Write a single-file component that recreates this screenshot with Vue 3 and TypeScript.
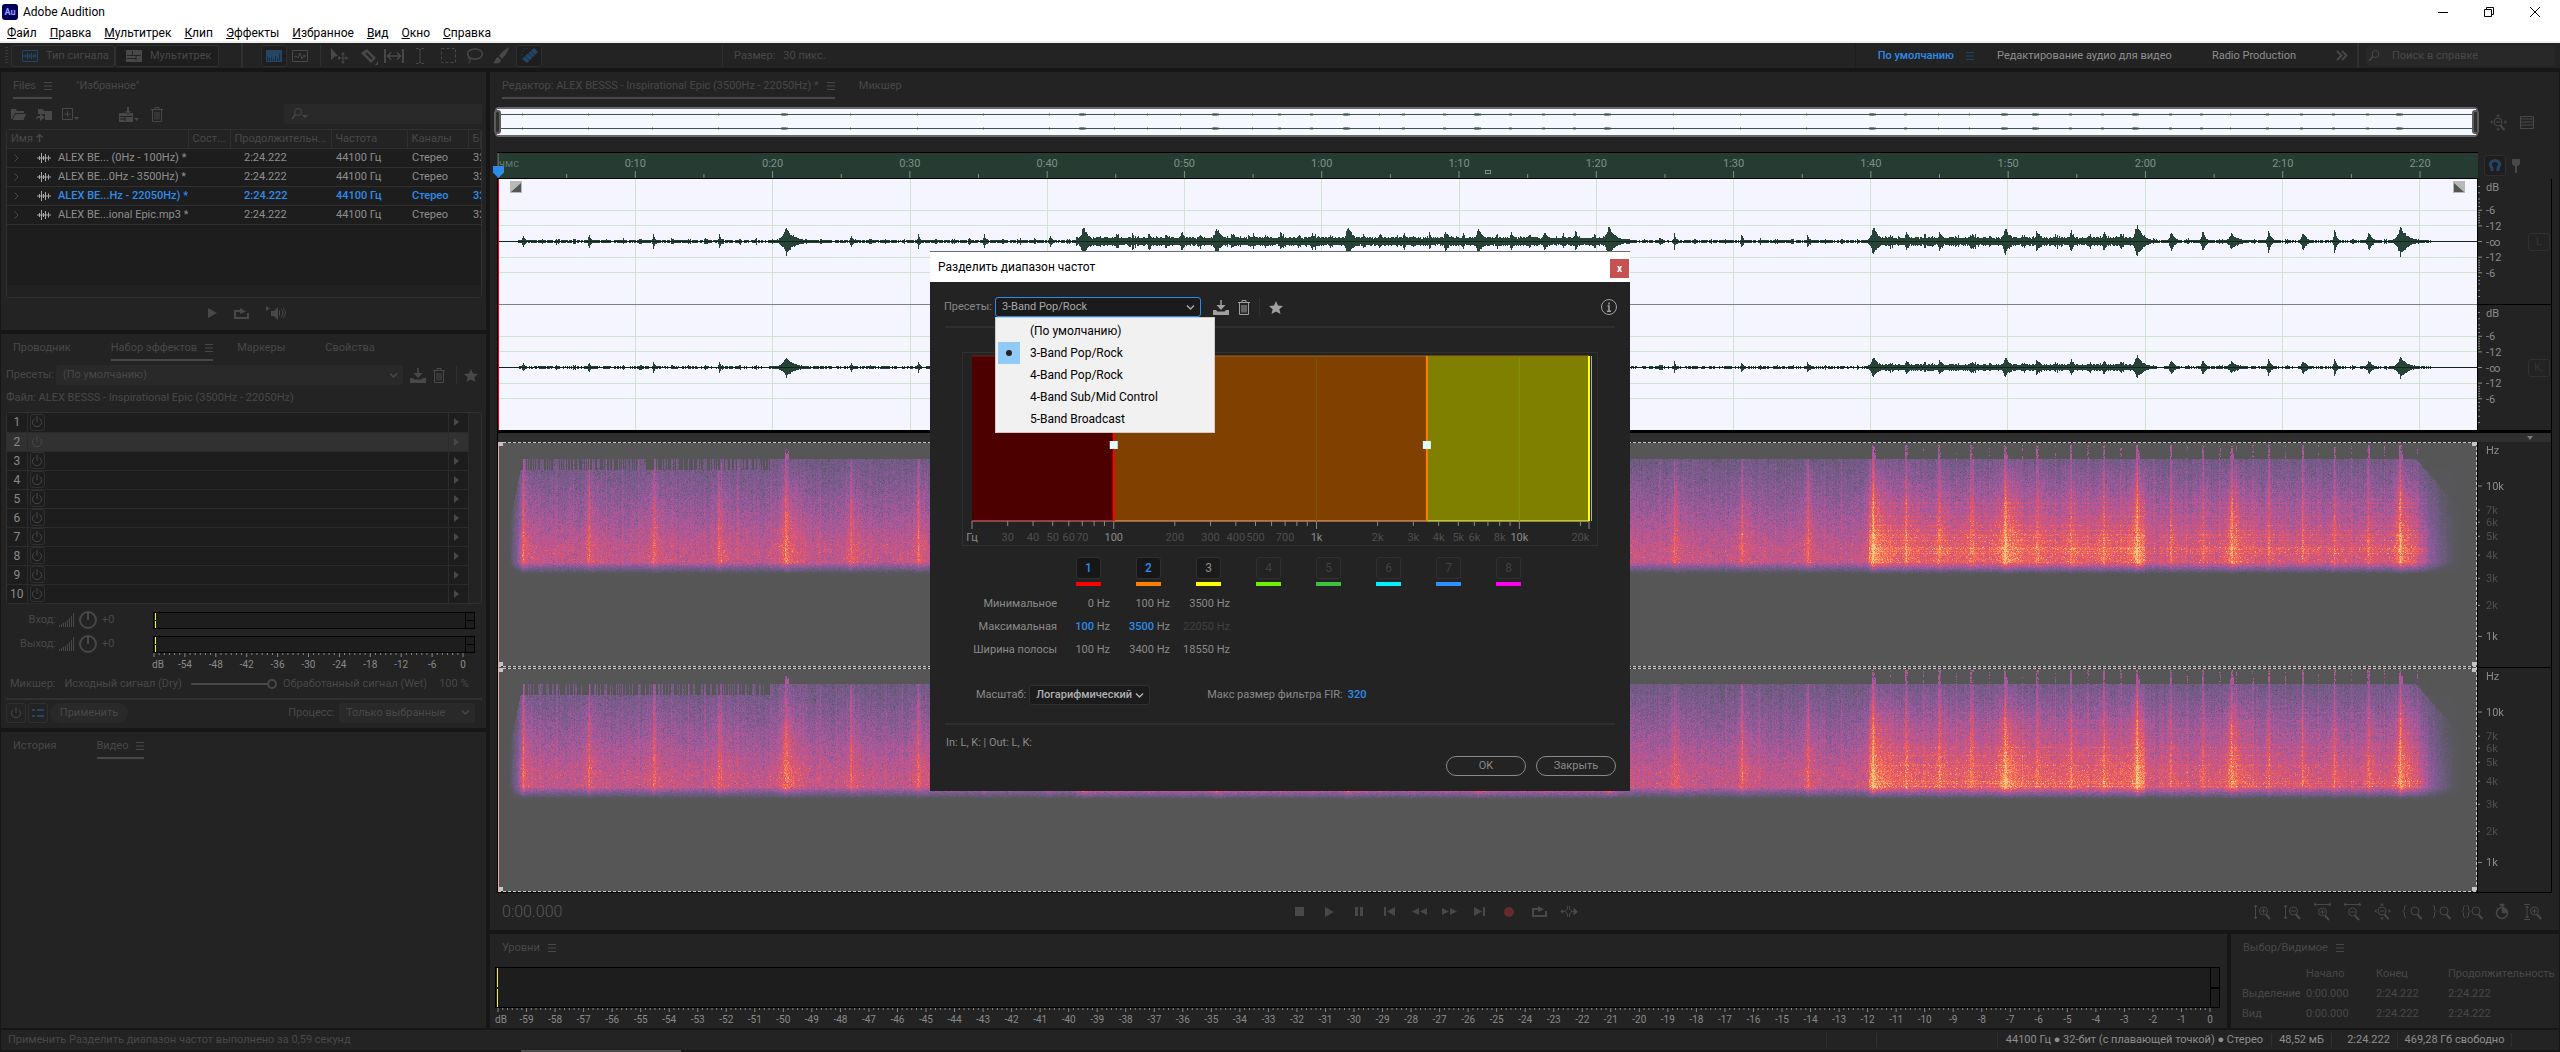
<script setup lang="ts">
import { h, onMounted, onBeforeUnmount, ref } from 'vue'

const duration = 144.222

/* ---------- icons ---------- */
const glass = (cx: number, cy: number) =>
  `<circle cx="${cx}" cy="${cy}" r="4" fill="none" stroke="currentColor"/><path d="M${cx + 2.5} ${cy + 3.5}l4 4.5" stroke="currentColor" stroke-width="2"/>`
const icons: Record<string, [number, number, string]> = {
  wavebox: [16, 12, '<path d="M.5.5h15v11H.5z" fill="none" stroke="currentColor"/><path d="M1 6h14M3.5 4v4M5.500 2.500v7M7.500 4v4M9.500 3v6M11.500 4.500v3M13 3v5" stroke="currentColor"/>'],
  multibox: [16, 12, '<path d="M0 0h16v12H0z" fill="currentColor"/><path d="M6.500 1v4M1 5.500h14M10 6v5M1 8.500h9" stroke="#232323"/>'],
  spectral: [16, 12, '<path d="M0 0h16v12H0z" fill="currentColor"/><path d="M1.500 6v5M3.500 8v3M5.500 7v4M7.500 9v2M9.500 6v5M11.500 8v3M13.500 4v7" stroke="#1a2c3e"/>'],
  pitch: [16, 12, '<path d="M.5.500h15v11H.5z" fill="none" stroke="currentColor"/><path d="M2 7l2-1 2 2 2-5 2 6 2-4 1 2 1-2" fill="none" stroke="currentColor"/>'],
  move: [18, 18, '<path d="M1 1l7 8-3 .5L1 13z" fill="currentColor"/><path d="M13 6v10M8 11h10" stroke="currentColor"/><path d="M13 5l-2 2.500h4zM13 17l-2-2.500h4zM7.500 11l2.500-2v4zM18 11l-2.500-2v4z" fill="currentColor"/>'],
  razor: [18, 18, '<path d="M1 6l6-4 9 9-5 5z" fill="currentColor"/><path d="M6 6l6 6" stroke="#232323" stroke-width="2"/><path d="M18 14v4h-3z" fill="currentColor"/>'],
  slip: [20, 16, '<path d="M1 1v14M19 1v14" stroke="currentColor" stroke-width="2"/><path d="M4 8h12M7 4.500L3.500 8 7 11.500M13 4.500L16.500 8 13 11.500" fill="none" stroke="currentColor" stroke-width="1.500"/>'],
  ibeam: [8, 16, '<path d="M0 .5h2.500L4 2l1.500-1.500H8M0 15.500h2.500L4 14l1.500 1.500H8M4 2v12" fill="none" stroke="currentColor"/>'],
  marquee: [15, 15, '<path d="M.5.500h14v14H.5z" fill="none" stroke="currentColor" stroke-dasharray="3 2"/>'],
  lasso: [17, 16, '<ellipse cx="9" cy="6" rx="7.500" ry="5" fill="none" stroke="currentColor" stroke-width="1.500"/><path d="M2.500 9c-2 2 1 3 2 2M4 11c1 2 0 4-2 4" fill="none" stroke="currentColor"/>'],
  brush: [17, 17, '<path d="M16 0c-5 3-8 6-10 9l3 3c3-3 6-7 7-12zM5 10c-3 1-2 4-5 6 4 1 8 0 8-3z" fill="currentColor"/>'],
  heal: [17, 17, '<path d="M1 12L13 1l4 4L6 16z" fill="currentColor"/><path d="M7 6l5 5M10 4l4 4M4 9l5 5" stroke="#1c2a38"/><path d="M1 8c-1-4 3-8 8-6" fill="none" stroke="currentColor" stroke-dasharray="1 2"/>'],
  menu: [8, 8, '<path d="M0 .5h8M0 4h8M0 7.500h8" stroke="currentColor"/>'],
  folder: [15, 12, '<path d="M0 1h5l1 2h7v2H4L1 11H0zM4.500 6H15l-2.500 6H1.500z" fill="currentColor"/>'],
  importf: [16, 13, '<path d="M2 1h5l1 2h8v9H9V6H2z" fill="currentColor"/><path d="M0 12c0-4 2-4 4-4V5l5 4.500L4 13v-3c-2 0-3 0-4 2z" fill="currentColor"/>'],
  newf: [17, 13, '<path d="M.5.500h10v11H.5zM5.500 3v6M2.500 6h6" fill="none" stroke="currentColor"/><path d="M12 9h5l-2.500 3z" fill="currentColor"/>'],
  insert: [20, 15, '<path d="M0 6h14v9H0z" fill="currentColor"/><path d="M1 9.500h12M6 10v4M1 12h5" stroke="#232323"/><path d="M9 0v6M5.500 4L9 8l3.500-4z" stroke="#232323" stroke-width=".5" fill="currentColor"/><path d="M9 0v5" stroke="currentColor" stroke-width="2"/><path d="M15 11h5l-2.500 3z" fill="currentColor"/>'],
  trash: [12, 15, '<path d="M0 2.500h12M4 2V.5h4V2M1.500 3v11.500h9V3M4 5v7.500M6 5v7.500M8 5v7.500" fill="none" stroke="currentColor"/>'],
  find: [17, 12, '<circle cx="7" cy="4" r="3.500" fill="none" stroke="currentColor"/><path d="M4.500 6.500L1 11" stroke="currentColor" stroke-width="1.500"/><path d="M11 7h6l-3 3z" fill="currentColor"/>'],
  lens: [12, 12, '<circle cx="7.500" cy="4" r="3.500" fill="none" stroke="currentColor"/><path d="M5 6.500L1 11" stroke="currentColor" stroke-width="1.500"/>'],
  up: [7, 8, '<path d="M3.500 0v8" stroke="currentColor" stroke-width="1.500"/><path d="M.5 3.500l3-3 3 3" fill="none" stroke="currentColor" stroke-width="1.500"/>'],
  wave: [14, 10, '<path d="M0 5h14M2.500 3v4M4.500 0v10M6.500 3v4M8.500 1v8M11.500 2.500v5" stroke="currentColor"/>'],
  right: [5, 8, '<path d="M.5.500L4 4 .5 7.500" fill="none" stroke="currentColor"/>'],
  down: [9, 5, '<path d="M1 .5L4.500 4 8 .5" fill="none" stroke="currentColor" stroke-width="1.500"/>'],
  play: [9, 10, '<path d="M0 0l9 5-9 5z" fill="currentColor"/>'],
  loop: [15, 11, '<path d="M6 3H1v7h13V5" fill="none" stroke="currentColor" stroke-width="2"/><path d="M6 0l6 3.500L6 6z" fill="currentColor"/>'],
  autoplay: [20, 14, '<path d="M0 0l4 2.500L0 5zM5 5h3l4-4v13l-4-4H5z" fill="currentColor"/><path d="M13.500 4.500v5M15 3c2.500 2 2.500 6 0 8M17 2c3 3 3 7 0 10" fill="none" stroke="currentColor"/>'],
  save: [16, 15, '<path d="M0 10h3l1.500 1.500h7L13 10h3v5H0z" fill="currentColor"/><path d="M8 0v6" stroke="currentColor" stroke-width="1.500"/><path d="M3.500 5h9L8 10z" fill="currentColor"/>'],
  star: [14, 13, '<path d="M7 0l2 4.500 5 .5-3.700 3.300L11.500 13 7 10.500 2.500 13l1.200-4.700L0 5l5-.5z" fill="currentColor"/>'],
  power: [12, 12, '<path d="M3.500 2.500a4.500 4.500 0 1 0 5 0M6 0v6" fill="none" stroke="currentColor"/>'],
  tri: [5, 8, '<path d="M0 0l5 4-5 4z" fill="currentColor"/>'],
  bars: [15, 14, '<path d="M.5 12v2M2.500 11v3M4.500 10v4M6.500 9v5M8.500 7v7M10.500 5v9M12.500 3v11M14.500 0v14" stroke="currentColor"/>'],
  list: [12, 8, '<path d="M0 1h3M5 1h7M0 7h3M5 7h7" stroke="currentColor" stroke-width="2"/>'],
  more: [12, 9, '<path d="M1 0l4.500 4.500L1 9M6 0l4.500 4.500L6 9" fill="none" stroke="currentColor" stroke-width="2"/>'],
  info: [16, 16, '<circle cx="8" cy="8" r="7.500" fill="none" stroke="currentColor"/><path d="M8 3.500v2M6.500 7H8v5M6 12.200h4" fill="none" stroke="currentColor" stroke-width="1.500"/>'],
  stop: [9, 9, '<path d="M0 0h9v9H0z" fill="currentColor"/>'],
  pause: [8, 9, '<path d="M0 0h3v9H0zM5 0h3v9H5z" fill="currentColor"/>'],
  prev: [11, 9, '<path d="M0 0h2v9H0zM11 0v9L3 4.500z" fill="currentColor"/>'],
  rew: [15, 7, '<path d="M7 0v7L0 3.500zM15 0v7L8 3.500z" fill="currentColor"/>'],
  ff: [15, 7, '<path d="M0 0l7 3.500L0 7zM8 0l7 3.500L8 7z" fill="currentColor"/>'],
  next: [11, 9, '<path d="M9 0h2v9H9zM0 0l8 4.500L0 9z" fill="currentColor"/>'],
  rec: [10, 10, '<circle cx="5" cy="5" r="5" fill="#662a2c"/>'],
  skip: [17, 11, '<path d="M6.500 0v3L4 5.500 6.500 8v3M8.500 0v3l2.500 2.500L8.500 8v3" fill="none" stroke="currentColor"/><path d="M0 5.500h4M10 5.500h6M2 3.500L0 5.500l2 2M13 2.500l3.500 3-3.500 3z" fill="currentColor" stroke="currentColor"/>'],
  zinv: [17, 16, '<path d="M1.500 1v14M0 3l1.500-2L3 3M0 13l1.500 2L3 13M7 7h5M9.500 4.500v5" fill="none" stroke="currentColor"/>' + glass(9.5, 7)],
  zoutv: [17, 16, '<path d="M1.500 1v14M0 3l1.500-2L3 3M0 13l1.500 2L3 13M7 7h5" fill="none" stroke="currentColor"/>' + glass(9.5, 7)],
  zinh: [17, 17, '<path d="M0 1.500h17M2 0L0 1.500 2 3M15 0l2 1.500L15 3M6 9h5M8.500 6.500v5" fill="none" stroke="currentColor"/>' + glass(8.5, 9)],
  zouth: [17, 17, '<path d="M0 1.500h17M2 0L0 1.500 2 3M15 0l2 1.500L15 3M6 9h5" fill="none" stroke="currentColor"/>' + glass(8.5, 9)],
  zfull: [17, 17, '<path d="M6 8h4.500" stroke="currentColor"/><path d="M8 0l2 2.500H6zM8 17l2-2.500H6zM0 8l2.500-2v4zM17 8l-2.500-2v4z" fill="currentColor"/>' + glass(8, 8)],
  zsell: [19, 15, '<path d="M3 1L1.500 3v3L0 7.500 1.500 9v3L3 14" fill="none" stroke="currentColor"/>' + glass(12, 7)],
  zselr: [18, 15, '<path d="M0 1l1.500 2v3L3 7.500 1.500 9v3L0 14" fill="none" stroke="currentColor"/>' + glass(11, 7)],
  zsel: [21, 15, '<path d="M3 1L1.500 3v3L0 7.500 1.500 9v3L3 14M5 1l1.500 2v3L8 7.500 6.500 9v3L5 14" fill="none" stroke="currentColor"/>' + glass(14, 7)],
  timer: [14, 15, '<circle cx="7" cy="9" r="5.500" fill="none" stroke="currentColor" stroke-width="1.500"/><path d="M7 1v8h5V7L9 4zM5 0h4v2H5zM1 3l2 2" fill="currentColor" stroke="currentColor" stroke-width=".5"/>'],
  zamp: [17, 16, '<path d="M0 .5h6M0 15.500h6M3 2v12M1.500 4L3 2l1.500 2M1.500 12L3 14l1.500-2M8 7h5M10.500 4.500v5" fill="none" stroke="currentColor"/>' + glass(10.5, 7)],
  layout: [14, 13, '<path d="M.5.500h13v12H.5zM1 3h12M1 6h12M1 9h12" fill="none" stroke="currentColor"/>'],
  magnet: [12, 13, '<path d="M3 12V9C-1 4 3 1.500 6 1.500S13 4 9 9v3" fill="none" stroke="currentColor" stroke-width="3"/>'],
  pin: [8, 14, '<path d="M0 0h8v5L6 7H5v7H3V7H2L0 5z" fill="currentColor"/>'],
  min: [10, 10, '<path d="M0 5.500h10" stroke="currentColor"/>'],
  restore: [10, 10, '<path d="M.5 2.500h7v7h-7zM2.500 2V.5h7v7H8" fill="none" stroke="currentColor"/>'],
  close: [10, 10, '<path d="M0 0l10 10M10 0L0 10" stroke="currentColor"/>'],
}
const Ico = (p: { n: string }) => {
  const [w, hh, body] = icons[p.n]
  return h('svg', { width: w, height: hh, viewBox: `0 0 ${w} ${hh}`, 'aria-hidden': 'true', innerHTML: body })
}
Ico.props = ['n']

/* ---------- data ---------- */
const menus = ['Файл', 'Правка', 'Мультитрек', 'Клип', 'Эффекты', 'Избранное', 'Вид', 'Окно', 'Справка']
const files = [
  { name: 'ALEX BE... (0Hz - 100Hz) *', on: false },
  { name: 'ALEX BE...0Hz - 3500Hz) *', on: false },
  { name: 'ALEX BE...Hz - 22050Hz) *', on: true },
  { name: 'ALEX BE...ional Epic.mp3 *', on: false },
]
const rackScale = [-54, -48, -42, -36, -30, -24, -18, -12, -6, 0]
const seconds = Array.from({ length: 14 }, (_, i) => (i + 1) * 10)
const clock = (s: number) => `${Math.floor(s / 60)}:${String(s % 60).padStart(2, '0')}`
const pct = (v: number) => `${v}%`
const levels = ['-6', '-12', '-∞', '-12', '-6']
const levelY = [25, 37.5, 50, 62.5, 75]
const minorDb = [6, 11, 16, 19, 22, 27, 29, 31, 33, 35, 65, 67, 69, 71, 73, 78, 81, 84, 89, 94]
const hz = [
  { l: '10k', y: 19.6, b: true }, { l: '7k', y: 30.4 }, { l: '6k', y: 35.7 }, { l: '5k', y: 42 },
  { l: '4k', y: 50.4 }, { l: '3k', y: 60.7 }, { l: '2k', y: 72.8 }, { l: '1k', y: 86.6, b: true },
]
const transport = ['stop', 'play', 'pause', 'prev', 'rew', 'ff', 'next', 'rec', 'loop', 'skip']
const zooms = ['zinv', 'zoutv', 'zinh', 'zouth', 'zfull', 'zsell', 'zselr', 'zsel', 'timer', 'zamp']
const presets = ['(По умолчанию)', '3-Band Pop/Rock', '4-Band Pop/Rock', '4-Band Sub/Mid Control', '5-Band Broadcast']
const bands = [
  { c: '#ff0000', s: 'on' }, { c: '#ff8000', s: 'on' }, { c: '#ffff00', s: 'last' }, { c: '#70f000', s: '' },
  { c: '#40c040', s: '' }, { c: '#00f0ff', s: '' }, { c: '#3090ff', s: '' }, { c: '#ff00f0', s: '' },
]
const freqX = (f: number) => (Math.log10(f / 20) / Math.log10(22050 / 20)) * 100
const freqTicks = [20, 30, 40, 50, 60, 70, 80, 90, 100, 200, 300, 400, 500, 600, 700, 800, 900, 1000, 2000, 3000, 4000, 5000, 6000, 7000, 8000, 9000, 10000, 20000, 22050]
const freqLabels: [number, string, boolean][] = [
  [20, 'Гц', true], [30, '30', false], [40, '40', false], [50, '50', false], [60, '60', false], [70, '70', false],
  [100, '100', true], [200, '200', false], [300, '300', false], [400, '400', false], [500, '500', false], [700, '700', false],
  [1000, '1k', true], [2000, '2k', false], [3000, '3k', false], [4000, '4k', false], [5000, '5k', false], [6000, '6k', false],
  [8000, '8k', false], [10000, '10k', true], [20000, '20k', false],
]

/* ---------- audio pictures ---------- */
// [time, height, decay] of every hit in the track
const hits: [number, number, number][] = [
  [1.8, 9, 0.12], [6.6, 9, 0.12], [11.3, 9, 0.12], [16.1, 9, 0.12], [20.95, 16, 0.6], [25.7, 9, 0.12], [30.6, 9, 0.12], [35.4, 9, 0.12], [40.2, 9, 0.12],
  [42.6, 20, 0.35], [45, 8, 0.2], [47.4, 11, 0.25], [49.8, 11, 0.3], [52.3, 18, 0.4], [55, 10, 0.2], [57, 12, 0.2], [59.3, 12, 0.2], [61.9, 19, 0.4],
  [64.3, 9, 0.2], [66, 12, 0.2], [69, 13, 0.25], [71.4, 18, 0.35], [73.8, 13, 0.2], [76.2, 13, 0.2], [78.5, 13, 0.2], [80.9, 18, 0.5],
  [85.7, 9, 0.12], [90.6, 10, 0.12], [95.4, 9, 0.12],
  [100.2, 18, 0.4], [102.6, 12, 0.25], [105, 11, 0.2], [107.3, 9, 0.3], [109.8, 17, 0.4], [112.1, 16, 0.15], [114.6, 15, 0.2], [117, 14, 0.2], [119.4, 20, 0.45],
  [121.9, 12, 0.25], [124.2, 14, 0.2], [126.3, 9, 0.5], [129, 14, 0.2], [131.5, 12, 0.25], [133.8, 15, 0.15], [136.3, 12, 0.25], [138.6, 18, 0.5],
]
const rng = (seed: number) => () => {
  seed = (seed * 1664525 + 1013904223) >>> 0
  return seed / 4294967296
}
const loud = (t: number) => (t > 42.1 && t < 81.5) || (t > 99.9 && t < 120)
const tail = (t: number) => t > 121 && t < 140.6
const envelope = (t: number, r: () => number) => {
  if (t < 1.4 || t > 140.8) return 0
  let v = loud(t) ? 3 + r() * 2 : 0.4 + r() * 0.8
  const grid = (t + 0.6) % 1.2
  if (grid < 0.25) v += (loud(t) ? 4 : 2) * r()
  for (const [p, a, w] of hits) {
    const d = t - p
    if (d > -0.9 && d < 4) {
      const shape = d < 0 ? Math.exp(d / (w * 0.45)) : Math.exp(-d / w)
      v = Math.max(v, a * shape * (0.85 + r() * 0.15))
    }
  }
  return v
}

const overview = ref<HTMLCanvasElement>()
const waves = ref<HTMLCanvasElement>()
const spectrum = ref<HTMLCanvasElement>()
const prepare = (c: HTMLCanvasElement) => {
  c.width = c.clientWidth
  c.height = c.clientHeight
  return c.getContext('2d')!
}
function drawOverview(c: HTMLCanvasElement) {
  const g = prepare(c)
  g.fillStyle = '#f6f8ff'
  g.fillRect(0, 0, c.width, c.height)
  for (const y of [5, 19]) {
    g.fillStyle = '#3c5548'
    g.fillRect(0, y, c.width, 1)
    for (const [p, a] of hits) {
      const x = Math.round((p / duration) * c.width)
      const w = a > 15 ? 7 : a > 11 ? 3 : 1
      g.fillStyle = 'rgba(60,85,72,.4)'
      g.fillRect(x - (w >> 1), y - 1, w, 3)
      if (a > 15) g.fillRect(x - 2, y - 1, 4, 3)
    }
  }
}
function drawWaves(c: HTMLCanvasElement) {
  const g = prepare(c)
  const W = c.width
  const H = c.height
  const half = (H - 1) / 2
  g.fillStyle = '#f5f5ff'
  g.fillRect(0, 0, W, H)
  g.fillStyle = '#cfe3cf'
  for (const s of seconds) g.fillRect(Math.round((s / duration) * W), 0, 1, H)
  for (let ch = 0; ch < 2; ch++) {
    const top = ch * (half + 1)
    for (const p of [25, 37.5, 62.5, 75]) g.fillRect(0, Math.floor(top + (half * p) / 100), W, 1)
    const r = rng(11)
    const mid = Math.floor(top + half / 2)
    g.fillStyle = '#274237'
    for (let x = 0; x < W; x++) {
      const e = envelope((x / W) * duration, r) * (ch ? 0.72 : 1)
      const a = Math.round(e * (0.75 + r() * 0.25))
      const b = Math.round(e * (0.7 + r() * 0.25))
      if (e > 0) g.fillRect(x, mid - a, 1, a + b + 1)
    }
    g.fillStyle = '#10241b'
    g.fillRect(0, mid, W, 1)
    g.fillStyle = '#cfe3cf'
  }
  g.fillStyle = '#808080'
  g.fillRect(0, Math.round(half), W, 1)
  g.fillStyle = '#f00000'
  g.fillRect(0, 0, 1, H)
  for (const [x, dir] of [[12, 1], [W - 24, -1]]) {
    g.fillStyle = '#b8b8b8'
    g.fillRect(x, 2, 12, 12)
    g.fillStyle = '#555'
    g.beginPath()
    g.moveTo(x + (dir > 0 ? 11 : 1), 4)
    g.lineTo(x + 11, 13)
    g.lineTo(x + 1, 13)
    g.fill()
  }
}
const stops: [number, number[]][] = [
  [0, [86, 86, 87]], [0.14, [88, 87, 92]], [0.3, [108, 91, 128]], [0.46, [134, 90, 150]], [0.6, [172, 89, 156]],
  [0.72, [205, 84, 130]], [0.84, [232, 90, 94]], [0.98, [255, 128, 82]], [1.14, [255, 205, 130]],
]
const heat = (v: number) => {
  if (v <= 0) return stops[0][1]
  for (let i = 1; i < stops.length; i++) {
    if (v < stops[i][0]) {
      const [a, ca] = stops[i - 1]
      const [b, cb] = stops[i]
      const k = (v - a) / (b - a)
      return ca.map((q, j) => q + (cb[j] - q) * k)
    }
  }
  return stops[stops.length - 1][1]
}
function drawSpectrum(c: HTMLCanvasElement) {
  const g = prepare(c)
  const W = c.width
  const H = c.height
  const half = Math.floor(H / 2)
  const img = g.createImageData(W, H)
  const r = rng(77)
  for (let ch = 0; ch < 2; ch++) {
    const harmonics = Array.from({ length: half }, () => (r() > 0.8 ? 0.1 : 0))
    for (let x = 0; x < W; x++) {
      const t = (x / W) * duration
      const isLoud = loud(t)
      let spike = 0
      let body = 0
      for (const [p, a, w] of hits) {
        const d = t - p
        if (d > -1.2 && d < 5) {
          const big = w > 0.32
          const size = big ? 0.95 : isLoud || tail(t) ? 0.35 : 0.55
          body = Math.max(body, size * (d < 0 ? Math.exp(d / (big ? 0.4 : 0.3)) : Math.exp(-d / (big ? 0.9 : 0.6))))
          if (Math.abs(d) < 0.07 && a) spike = 0.12
        }
      }
      const busy = isLoud ? 0.12 : tail(t) ? 0.05 : 0
      const beat = (t + 0.6) % 1.2 < 0.1 ? 0.09 : 0
      const streak = (r() - 0.5) * 0.1 + beat + spike
      const fadeIn = Math.min(1, Math.max(0, (t - 0.6) / 1.2))
      const fadeOut = Math.min(1, Math.max(0, (143.3 - t) / 3.6))
      const gapTop = t < 20 && r() > 0.45
      const burst = (beat > 0 || spike > 0) && (isLoud || tail(t))
      for (let y = 0; y < half; y++) {
        const u = (y / half - 0.0714) / 0.5
        let v = 0
        if (u < 0) {
          if (burst && y > 2 && r() > (spike ? 0.15 : 0.65)) v = 0.45 + r() * 0.25
          else if (body > 0.75 && y > 14 - body * 8 * r()) v = 0.6
        } else if (u < 1.05) {
          v = 0.31 + 0.36 * Math.min(u / 0.8, 1) + busy * (0.3 + u) + streak * (1 - u * 0.6)
          v += body * (0.12 + 0.14 * Math.min(1, u * 2.5))
          if (busy) v += harmonics[y] * (0.2 + r()) * Math.min(1, u * 2)
          const n = r() - 0.5
          v += n * 0.22 + (r() > 0.93 ? 0.12 * (0.3 + u) : 0) - (r() > 0.93 ? 0.16 : 0)
          if (u < 0.1 && gapTop && !beat) v = 0
          if (u > 0.93) v *= Math.max(0, (1.05 - u - r() * 0.02) / 0.12)
          const edge = 1 - fadeIn
          if (fadeIn < 1) v = u < edge * 0.7 ? 0 : v * fadeIn
          if (fadeOut < 1) v = u < (1 - fadeOut) * 0.5 ? v * fadeOut * 0.4 : v * fadeOut
          if (t > 140.5 && u < 0.1) v = 0
        }
        const col = heat(v)
        const o = ((ch * half + y) * W + x) * 4
        img.data[o] = col[0]
        img.data[o + 1] = col[1]
        img.data[o + 2] = col[2]
        img.data[o + 3] = 255
      }
    }
  }
  g.putImageData(img, 0, 0)
  for (const y of [0, half - 1, half + 1, H - 1]) {
    g.fillStyle = '#303030'
    g.fillRect(0, y, W, 1)
    g.fillStyle = '#c8c8c8'
    for (let x = 0; x < W; x += 5) g.fillRect(x, y, 3, 1)
  }
  for (let y = 0; y < H; y += 5) g.fillRect(W - 1, y, 1, 3)
  g.fillStyle = '#f5a9a0'
  g.fillRect(0, 0, 1, H)
  g.fillStyle = '#c4c4c8'
  for (const y of [0, half - 5, half + 1, H - 5]) {
    g.fillRect(1, y, 4, 4)
    g.fillRect(W - 5, y, 4, 4)
  }
}
const draw = () => {
  if (overview.value) drawOverview(overview.value)
  if (waves.value) drawWaves(waves.value)
  if (spectrum.value) drawSpectrum(spectrum.value)
}
onMounted(() => {
  draw()
  window.addEventListener('resize', draw)
})
onBeforeUnmount(() => window.removeEventListener('resize', draw))
</script>

<template>
  <div class="app">
    <header class="titlebar">
      <span class="logo">Au</span>
      <h1>Adobe Audition</h1>
      <div class="winbtns">
        <button aria-label="Свернуть"><Ico n="min" /></button>
        <button aria-label="Восстановить"><Ico n="restore" /></button>
        <button aria-label="Закрыть окно"><Ico n="close" /></button>
      </div>
    </header>
    <nav class="menubar">
      <button v-for="m in menus" :key="m"><u>{{ m[0] }}</u>{{ m.slice(1) }}</button>
    </nav>

    <div class="toolbar">
      <span class="grip"></span>
      <div class="modes">
        <button><Ico n="wavebox" class="blue" />Тип сигнала</button>
        <button class="multi"><Ico n="multibox" />Мультитрек</button>
      </div>
      <i class="vsep s1"></i>
      <button class="tool active spec"><Ico n="spectral" /></button>
      <button class="tool"><Ico n="pitch" /></button>
      <i class="vsep s2"></i>
      <div class="tools">
        <button><Ico n="move" /></button>
        <button><Ico n="razor" /></button>
        <button><Ico n="slip" /></button>
        <button><Ico n="ibeam" /></button>
        <button><Ico n="marquee" /></button>
        <button><Ico n="lasso" /></button>
        <button><Ico n="brush" /></button>
      </div>
      <button class="tool active"><Ico n="heal" /></button>
      <i class="vsep s3"></i>
      <span class="size">Размер:<b>30 пикс.</b></span>
      <div class="workspaces">
        <button class="current">По умолчанию</button>
        <button class="wsmenu"><Ico n="menu" /></button>
        <button class="w2">Редактирование аудио для видео</button>
        <button class="w3">Radio Production</button>
        <button class="w4"><Ico n="more" /></button>
      </div>
      <label class="help"><Ico n="lens" /><input type="search" placeholder="Поиск в справке" aria-label="Поиск в справке" /></label>
    </div>

    <main class="workspace">
      <aside class="left">
        <section class="panel filespanel">
          <div class="tabs">
            <button class="tab on">Files<Ico n="menu" /></button>
            <button class="tab t24">"Избранное"</button>
          </div>
          <div class="filetools">
            <button><Ico n="folder" /></button>
            <button><Ico n="importf" /></button>
            <button><Ico n="newf" /></button>
            <button class="ins"><Ico n="insert" /></button>
            <button><Ico n="trash" /></button>
            <label class="filter"><Ico n="find" /><input type="search" aria-label="Поиск файлов" /></label>
          </div>
          <div class="filebox">
            <table class="files">
              <colgroup><col class="c1" /><col class="c2" /><col class="c3" /><col class="c4" /><col class="c5" /><col /></colgroup>
              <thead>
                <tr><th>Имя <Ico n="up" /></th><th>Сост...</th><th>Продолжительн...</th><th>Частота</th><th>Каналы</th><th>Би</th></tr>
              </thead>
              <tbody>
                <tr v-for="f in files" :key="f.name" :class="{ on: f.on }">
                  <td><div class="fname"><Ico n="right" class="chev" /><Ico n="wave" class="wv" />{{ f.name }}</div></td>
                  <td></td><td class="dur">2:24.222</td><td>44100 Гц</td><td>Стерео</td><td>32</td>
                </tr>
              </tbody>
            </table>
            <div class="hscroll"></div>
          </div>
          <div class="player">
            <button><Ico n="play" /></button><button><Ico n="loop" /></button><button><Ico n="autoplay" /></button>
          </div>
        </section>

        <section class="panel rack">
          <div class="tabs">
            <button class="tab">Проводник</button>
            <button class="tab on t40">Набор эффектов<Ico n="menu" /></button>
            <button class="tab t24">Маркеры</button>
            <button class="tab t40">Свойства</button>
          </div>
          <div class="presetrow">
            <label for="rackpreset">Пресеты:</label>
            <div class="pick wide"><select id="rackpreset"><option>(По умолчанию)</option></select><Ico n="down" /></div>
            <button><Ico n="save" /></button><button><Ico n="trash" /></button><i></i><button><Ico n="star" /></button>
          </div>
          <p class="filename">Файл: ALEX BESSS - Inspirational Epic (3500Hz - 22050Hz)</p>
          <div class="slotbox">
            <table class="slots">
              <tbody>
                <tr v-for="n in 10" :key="n" :class="{ sel: n === 2 }">
                  <td class="num">{{ n }}</td>
                  <td class="pw"><button><Ico n="power" /></button></td>
                  <td></td>
                  <td class="arr"><Ico n="tri" /></td>
                </tr>
              </tbody>
            </table>
          </div>
          <div v-for="l in ['Вход:', 'Выход:']" :key="l" class="gain">
            <span class="glabel">{{ l }}</span><Ico n="bars" /><button class="knob" :aria-label="l"></button><span class="gval">+0</span>
            <div class="meter"><span class="yl"></span><span class="clip"></span></div>
          </div>
          <svg class="rackscale">
            <line v-for="n in 61" :key="n" :x1="pct((n - 1) / 0.6)" :x2="pct((n - 1) / 0.6)" y1="0" :y2="(n - 1) % 6 ? 2 : 4" />
            <text x="0" y="15" dx="4">dB</text>
            <text v-for="v in rackScale" :key="v" :x="pct(((v + 60) / 60) * 100)" y="15">{{ v }}</text>
          </svg>
          <div class="mix">
            <span>Микшер:</span><label for="wet">Исходный сигнал (Dry)</label>
            <input id="wet" type="range" value="100" /><span class="wet">Обработанный сигнал (Wet)</span><span class="pc">100 %</span>
          </div>
          <div class="rackfoot">
            <button class="sq"><Ico n="power" /></button>
            <button class="sq bl"><Ico n="list" /></button>
            <button class="pill">Применить</button>
            <label for="proc">Процесс:</label>
            <div class="pick proc"><select id="proc"><option>Только выбранные</option></select><Ico n="down" /></div>
          </div>
        </section>

        <section class="panel history">
          <div class="tabs">
            <button class="tab">История</button>
            <button class="tab on t40">Видео<Ico n="menu" /></button>
          </div>
        </section>
      </aside>

      <div class="right">
        <section class="panel editor">
          <div class="tabs">
            <button class="tab on">Редактор: ALEX BESSS - Inspirational Epic (3500Hz - 22050Hz) *<Ico n="menu" /></button>
            <button class="tab t24">Микшер</button>
          </div>
          <div class="overrow">
            <div class="over"><canvas ref="overview"></canvas><span class="hnd l"></span><span class="hnd r"></span></div>
            <div class="overbtns"><button><Ico n="zfull" /></button><button><Ico n="layout" /></button></div>
          </div>
          <div class="rulerrow">
            <div class="ruler">
              <svg>
                <text x="1" y="14" class="unit">чмс</text>
                <line x1="0" x2="0" y1="0" y2="25" />
                <g v-for="s in seconds" :key="s">
                  <line :x1="pct((s / duration) * 100)" :x2="pct((s / duration) * 100)" y1="18" y2="25" />
                  <line :x1="pct(((s - 5) / duration) * 100)" :x2="pct(((s - 5) / duration) * 100)" y1="21" y2="25" />
                  <text :x="pct((s / duration) * 100)" y="14">{{ clock(s) }}</text>
                </g>
                <svg x="50%" y="17"><path d="M-3 .5h6M-3 3.500h6M-2.500 0v4M2.500 0v4" stroke="#7d9287" /></svg>
              </svg>
              <span class="playhead"></span>
            </div>
            <div class="rulerbtns"><button class="snap"><Ico n="magnet" /></button><button><Ico n="pin" /></button></div>
          </div>
          <div class="body">
            <canvas ref="waves" class="waves"></canvas>
            <div class="scales">
              <div v-for="b in ['L', 'K:']" :key="b" class="scale">
                <svg>
                  <line v-for="m in minorDb" :key="m" x1="0" x2="2" :y1="pct(m)" :y2="pct(m)" />
                  <text x="8" y="12">dB</text>
                  <g v-for="(l, i) in levels" :key="i">
                    <line x1="0" x2="4" :y1="pct(levelY[i])" :y2="pct(levelY[i])" /><text x="8" :y="pct(levelY[i])" dy="4">{{ l }}</text>
                  </g>
                </svg>
                <button>{{ b }}</button>
              </div>
            </div>
            <div class="strip"><i></i></div>
            <canvas ref="spectrum" class="spectrum"></canvas>
            <div class="scales hz">
              <div v-for="b in 2" :key="b" class="scale">
                <svg>
                  <text x="8" y="12" class="hi">Hz</text>
                  <g v-for="f in hz" :key="f.l">
                    <line x1="0" :x2="f.b ? 4 : 2" :y1="pct(f.y)" :y2="pct(f.y)" /><text x="8" :y="pct(f.y)" dy="4" :class="{ hi: f.b }">{{ f.l }}</text>
                  </g>
                </svg>
              </div>
            </div>
          </div>
          <div class="transport">
            <output class="time">0:00.000</output>
            <div class="tbtns"><button v-for="t in transport" :key="t"><Ico :n="t" /></button></div>
            <div class="zbtns"><button v-for="z in zooms" :key="z"><Ico :n="z" /></button></div>
          </div>
        </section>

        <div class="bottom">
          <section class="panel levels">
            <div class="tabs"><span class="tab">Уровни<Ico n="menu" /></span></div>
            <div class="meter big"><span class="yl"></span><span class="clip"></span></div>
            <svg class="levelscale">
              <line v-for="n in 361" :key="n" :x1="pct((n - 1) / 3.6)" :x2="pct((n - 1) / 3.6)" y1="0" :y2="(n - 1) % 6 ? 2 : 4" />
              <text x="0" dx="3" y="15">dB</text>
              <text v-for="n in 60" :key="n" :x="pct(n / 0.6)" y="15">{{ n - 60 }}</text>
            </svg>
          </section>
          <section class="panel selection">
            <div class="tabs"><span class="tab">Выбор/Видимое<Ico n="menu" /></span></div>
            <table>
              <tbody>
                <tr><td></td><th>Начало</th><th>Конец</th><th>Продолжительность</th></tr>
                <tr><th>Выделение</th><td>0:00.000</td><td>2:24.222</td><td>2:24.222</td></tr>
                <tr><th>Вид</th><td>0:00.000</td><td>2:24.222</td><td>2:24.222</td></tr>
              </tbody>
            </table>
          </section>
        </div>
      </div>
    </main>

    <footer class="status">
      <span class="msg">Применить Разделить диапазон частот выполнено за 0,59 секунд</span>
      <span class="e1"></span><span class="e2"></span>
      <span class="st">44100 Гц ● 32-бит (с плавающей точкой) ● Стерео</span>
      <span class="st s60">48,52 мБ</span>
      <span class="st s66">2:24.222</span>
      <span class="st s114">469,28 Гб свободно</span>
      <span class="e3"></span>
    </footer>
    <div class="edge"><i></i></div>

    <div class="overlay">
      <section class="dialog" role="dialog" aria-labelledby="dlgtitle">
        <header><h2 id="dlgtitle">Разделить диапазон частот</h2><button aria-label="Закрыть диалог">x</button></header>
        <div class="dpreset">
          <label for="preset">Пресеты:</label>
          <div class="pick focus">
            <select id="preset"><option>3-Band Pop/Rock</option></select><Ico n="down" />
            <ul class="drop"><li v-for="(p, i) in presets" :key="p"><span :class="{ cur: i === 1 }"></span>{{ p }}</li></ul>
          </div>
          <button><Ico n="save" /></button><button><Ico n="trash" /></button><i></i><button><Ico n="star" /></button>
          <button class="inf"><Ico n="info" /></button>
        </div>
        <hr />
        <div class="graph">
          <div class="plot">
            <svg>
              <rect x="0" y="0" :width="pct(freqX(100))" height="100%" fill="#4c0000" />
              <rect :x="pct(freqX(100))" y="0" :width="pct(freqX(3500) - freqX(100))" height="100%" fill="#804000" />
              <rect :x="pct(freqX(3500))" y="0" :width="pct(100 - freqX(3500))" height="100%" fill="#808000" />
              <g stroke-width="1">
                <line x1="0" :x2="pct(freqX(100))" y1="0" y2="0" stroke="#7a2020" />
                <line :x1="pct(freqX(100))" x2="100%" y1="0" y2="0" stroke="#a06a10" />
                <line x1="0" :x2="pct(freqX(100))" y1="100%" y2="100%" stroke="#f07080" />
                <line :x1="pct(freqX(100))" :x2="pct(freqX(3500))" y1="100%" y2="100%" stroke="#ffb070" />
                <line :x1="pct(freqX(3500))" x2="100%" y1="100%" y2="100%" stroke="#ffff70" />
                <line :x1="pct(freqX(1000))" :x2="pct(freqX(1000))" y1="1%" y2="100%" stroke="#7a5a00" />
                <line :x1="pct(freqX(10000))" :x2="pct(freqX(10000))" y1="1%" y2="100%" stroke="#7a9a00" />
              </g>
              <g stroke-width="2">
                <line :x1="pct(freqX(100))" :x2="pct(freqX(100))" y1="0" y2="100%" stroke="#ff0000" />
                <line :x1="pct(freqX(3500))" :x2="pct(freqX(3500))" y1="0" y2="100%" stroke="#ff8000" />
                <line x1="100%" x2="100%" y1="0" y2="100%" stroke="#ffff00" />
              </g>
              <svg :x="pct(freqX(100))" y="85" class="vis"><rect x="-4" width="8" height="8" fill="#e0ffff" /></svg>
              <svg :x="pct(freqX(3500))" y="85" class="vis"><rect x="-4" width="8" height="8" fill="#e0ffff" /></svg>
            </svg>
          </div>
          <svg class="faxis">
            <line v-for="f in freqTicks" :key="f" :x1="pct(freqX(f))" :x2="pct(freqX(f))" y1="0" :y2="[20, 100, 1000, 10000, 22050].includes(f) ? 8 : 5" />
            <text v-for="f in freqLabels" :key="f[0]" :x="pct(freqX(f[0]))" y="20" :class="{ hi: f[2] }">{{ f[1] }}</text>
          </svg>
        </div>
        <div class="bands">
          <div v-for="(b, i) in bands" :key="b.c" class="band"><button :class="b.s">{{ i + 1 }}</button><i :style="{ background: b.c }"></i></div>
        </div>
        <table class="ranges">
          <tbody>
            <tr><th>Минимальное</th><td>0 Hz</td><td>100 Hz</td><td>3500 Hz</td></tr>
            <tr><th>Максимальная</th><td><b>100</b> Hz</td><td><b>3500</b> Hz</td><td class="off">22050 Hz</td></tr>
            <tr><th>Ширина полосы</th><td>100 Hz</td><td>3400 Hz</td><td>18550 Hz</td></tr>
          </tbody>
        </table>
        <div class="opts">
          <label for="scale">Масштаб:</label>
          <div class="pick log"><select id="scale"><option>Логарифмический</option></select><Ico n="down" /></div>
          <span class="fir">Макс размер фильтра FIR:</span><b>320</b>
        </div>
        <hr />
        <p class="io">In: L, K: | Out: L, K:</p>
        <div class="actions"><button>OK</button><button>Закрыть</button></div>
      </section>
    </div>
  </div>
</template>

<style>
body { background: #161616; }
</style>

<style scoped>
* { box-sizing: border-box; }
.app { position: relative; display: flex; flex-direction: column; min-height: 100vh; background: #161616; color: #484848; font: 11px/14px Roboto, sans-serif; }
button, input, select { font: inherit; color: inherit; background: none; border: 0; padding: 0; margin: 0; outline: 0; }
button { display: flex; align-items: center; white-space: nowrap; }
svg { flex: none; overflow: visible; }
input { min-width: 0; }
select { appearance: none; width: 100%; height: 100%; grid-area: 1 / 1; }
i { font-style: normal; }
h1, h2, p, ul { margin: 0; padding: 0; font-weight: 400; }
canvas { display: block; }
table { border-collapse: collapse; }
th { font-weight: 400; text-align: left; }
td, th { padding: 0; }
.panel { background: #232323; }

.titlebar { display: flex; align-items: center; height: 24px; padding-left: 2px; background: #fff; color: #000; }
.titlebar h1 { font-size: 12px; margin-left: 5px; }
.logo { width: 16px; height: 16px; border-radius: 3px; background: #00005b; color: #9999ff; font: bold 9px/16px Roboto, sans-serif; text-align: center; }
.winbtns { display: flex; gap: 36px; margin-left: auto; padding-right: 20px; }
.menubar { display: flex; gap: 13px; height: 19px; padding: 0 7px; background: #fff; border-bottom: 2px solid #f0f0f0; color: #000; font-size: 12px; }

.toolbar { display: flex; align-items: center; height: 25px; background: #232323; }
.grip { width: 3px; height: 18px; margin: 0 3px 0 5px; background: repeating-linear-gradient(#3a3a3a 0 1px, transparent 1px 3px); }
.modes { display: flex; height: 22px; }
.modes button { width: 104px; height: 22px; padding-left: 10px; gap: 8px; border: 1px solid #303030; border-radius: 3px; }
.modes .multi { background: #1e1e1e; }
.blue { color: #244566; }
.vsep { width: 2px; height: 25px; background: #303030; }
.s1 { margin: 0 18px 0 22px; }
.s2 { height: 21px; margin: 0 9px 0 7px; width: 1px; }
.s3 { height: 21px; margin-left: 180px; width: 1px; }
.tool { width: 26px; height: 22px; justify-content: center; border-radius: 3px; }
.tool.active { border: 1px solid #2e2e2e; background: #1e1e1e; color: #244566; }
.tools { display: flex; align-items: center; gap: 10px; margin-right: 6px; }
.tools button:nth-child(2) { margin-left: 1px; }
.tools button:nth-child(3) { margin: 0 2px 0 -4px; }
.tools button:nth-child(4) { margin-right: 7px; }
.tools button:nth-child(1) { margin-right: 1px; }
.size { margin-left: 11px; }
.size b { font-weight: 400; margin-left: 8px; }
.workspaces { display: flex; align-items: center; height: 25px; margin-left: auto; padding-left: 22px; border-left: 1px solid #1c1c1c; color: #8e8e8e; }
.current { color: #2d8ceb; font-weight: 500; }
.wsmenu { margin-left: 12px; color: #244566; }
.w2 { margin-left: 23px; }
.w3 { margin-left: 40px; }
.w4 { margin: 0 9px 0 40px; color: #484848; }
.help { display: flex; align-items: center; width: 203px; height: 25px; border-left: 2px solid #303030; gap: 10px; padding-left: 3px; }
.help svg { position: relative; z-index: 1; margin: 0 -24px 0 6px; }
.help input { width: 194px; height: 20px; margin-right: 5px; padding-left: 26px; border-radius: 3px; background: #282828; }
.help input::placeholder { color: #484848; opacity: 1; }

.workspace { flex: 1; display: grid; grid-template-columns: 485px 1fr; gap: 4px; padding: 4px 1px 2px; }
.left, .right { display: flex; flex-direction: column; gap: 4px; min-width: 0; }
.tabs { display: flex; align-items: flex-start; height: 27px; padding: 7px 12px 0; }
.tab { display: flex; align-items: center; height: 20px; padding-bottom: 4px; white-space: nowrap; border-bottom: 2px solid transparent; color: #484848; }
.tab svg { margin-left: 8px; }
.tab.on { border-bottom-color: #484848; }
.t24 { margin-left: 24px; }
.t40 { margin-left: 40px; }

.filespanel { height: 258px; }
.filetools { display: flex; align-items: center; height: 20px; margin-top: 5px; padding: 0 4px 0 10px; gap: 10px; }
.ins { margin: 0 2px 0 30px; }
.filter { display: flex; align-items: center; width: 198px; height: 20px; margin-left: auto; padding-left: 7px; background: #292929; border-radius: 2px; }
.filter input { flex: 1; }
.filebox { display: flex; flex-direction: column; height: 169px; margin: 5px 4px 0 5px; border: 1px solid #303030; border-radius: 3px; background: #1d1d1d; overflow: hidden; }
.files { table-layout: fixed; width: 100%; white-space: nowrap; }
.c1 { width: 181px; } .c2 { width: 42px; } .c3 { width: 101px; } .c4 { width: 76px; } .c5 { width: 61px; }
.files th { height: 18px; padding-left: 4px; background: #232323; border-right: 1px solid #303030; overflow: hidden; }
.files td { height: 19px; padding-left: 5px; border-top: 1px solid #303030; border-bottom: 1px solid #303030; color: #8e8e8e; overflow: hidden; }
.files td.dur { padding-left: 14px; }
.files .on td { color: #2d8ceb; font-weight: 500; }
.fname { display: flex; align-items: center; }
.chev { margin: 0 18px 0 2px; color: #484848; }
.wv { margin-right: 7px; color: #a8a8a8; }
.hscroll { height: 12px; margin-top: auto; background: #212121; }
.player { display: flex; align-items: center; justify-content: center; gap: 17px; height: 30px; padding-left: 6px; }

.rack { height: 394px; }
.presetrow { display: flex; align-items: center; height: 20px; margin-top: 4px; padding-left: 5px; }
.pick { position: relative; display: grid; border-radius: 3px; }
.pick > svg { grid-area: 1 / 1; place-self: center end; margin-right: 5px; pointer-events: none; }
.wide { width: 347px; height: 20px; margin-left: 2px; background: #292929; }
.wide select, .proc select, .focus select, .log select { padding-left: 7px; }
.presetrow button { margin-left: 7px; }
.presetrow i { width: 1px; height: 18px; margin: 0 0 0 11px; background: #303030; }
.filename { margin: 6px 0 0 5px; }
.slotbox { height: 192px; margin: 7px 4px 0 5px; padding-right: 12px; border: 1px solid #303030; border-radius: 3px; }
.slots { width: 100%; background: #1d1d1d; }
.slots td { height: 19px; border-bottom: 1px solid #2b2b2b; border-right: 1px solid #2b2b2b; }
.slots .sel td { background: #313131; }
.slots .num { width: 20px; text-align: center; color: #8a8a8a; font-size: 12px; }
.slots .pw { width: 22px; border-right: 0; }
.pw button { width: 15px; height: 17px; margin-left: 2px; justify-content: center; border: 1px solid #303030; border-radius: 3px; }
.arr { width: 20px; padding-left: 5px; line-height: 0; }
.arr svg { display: block; }
.gain { display: flex; align-items: center; height: 18px; margin-top: 6px; padding-right: 11px; }
.slotbox + .gain { margin-top: 7px; }
.glabel { width: 55px; margin-right: 3px; text-align: right; }
.knob { width: 18px; height: 18px; margin: 0 5px; border: 2px solid #484848; border-radius: 50%; justify-content: center; align-items: flex-start; }
.knob::before { content: ''; width: 2px; height: 7px; background: #484848; }
.gval { flex: 1; }
.meter { position: relative; display: flex; justify-content: space-between; width: 322px; height: 17px; border: 1px solid #000; background: #1d1d1d; }
.yl { width: 1px; margin-left: 1px; background: linear-gradient(#f5f51e 48%, #1d1d1d 48% 54%, #f5f51e 54%); }
.clip { width: 9px; border-left: 1px solid #000; background: linear-gradient(#1d1d1d 48%, #000 48% 54%, #1d1d1d 54%); }
.rackscale { display: block; width: 309px; height: 21px; margin-left: 153px; font-size: 10px; }
.rackscale line, .levelscale line { stroke: #8a8a8a; }
.rackscale text, .levelscale text { fill: #8a8a8a; text-anchor: middle; }
.mix { display: flex; align-items: center; height: 20px; padding-left: 9px; }
.mix label { margin: 0 9px 0 9px; }
.mix input { appearance: none; width: 86px; height: 10px; background: linear-gradient(#484848, #484848) 0 4px / 76px 2px no-repeat; }
.mix input::-webkit-slider-thumb { appearance: none; width: 10px; height: 10px; border: 2px solid #484848; border-radius: 50%; }
.wet { margin-left: 6px; }
.pc { margin-left: 12px; }
.rackfoot { display: flex; align-items: center; margin: 4px 4px 0 5px; border-top: 2px solid #303030; height: 27px; padding-right: 7px; }
.sq { width: 20px; height: 20px; margin-right: 2px; justify-content: center; border: 1px solid #303030; border-radius: 3px; }
.bl { color: #244566; }
.pill { width: 78px; height: 20px; justify-content: center; border-radius: 10px; background: #292929; }
.rackfoot label { margin-left: auto; }
.proc { width: 136px; height: 20px; margin-left: 4px; background: #292929; }
.history { flex: 1; min-height: 60px; }

.editor { flex: 1; display: flex; flex-direction: column; min-height: 500px; }
.overrow { display: flex; margin: 8px 0 15px 5px; }
.over { position: relative; flex: 1; min-width: 0; height: 30px; border: 2px solid #686868; border-radius: 4px; background: #f6f8ff; }
.over canvas { width: 100%; height: 26px; }
.hnd { position: absolute; top: 1px; width: 7px; height: 24px; border-radius: 3px; border: 2px solid #5c5c5c; background: #303030; }
.hnd.l { left: -3px; }
.hnd.r { right: -3px; }
.overbtns { display: flex; align-items: center; gap: 13px; width: 81px; padding-left: 12px; }
.rulerrow { display: flex; padding-left: 7px; }
.ruler { position: relative; flex: 1; min-width: 0; height: 27px; border: 1px solid #000; border-width: 1px 0 1px 1px; background: #263c33; }
.ruler > svg { display: block; width: 100%; height: 25px; font-size: 11px; }
.ruler line { stroke: #7d9287; }
.ruler text { fill: #7d9287; text-anchor: middle; }
.ruler .unit { text-anchor: start; fill: #5d7569; }
.playhead { position: absolute; left: -5px; top: 13px; width: 11px; height: 12px; background: #2d8ceb; clip-path: polygon(0 0, 100% 0, 100% 55%, 50% 100%, 0 55%); }
.rulerbtns { display: flex; align-items: center; gap: 6px; width: 81px; padding-left: 6px; }
.snap { width: 22px; height: 21px; justify-content: center; border: 1px solid #2e2e2e; border-radius: 3px; background: #1e1e1e; color: #244566; }
.body { flex: 1; display: grid; grid-template: 251px 12px minmax(200px, 1fr) / minmax(0, 1fr) 74px; margin: 0 7px 0 7px; border: 1px solid #000; border-top: 0; }
.waves { width: 100%; height: 251px; }
.spectrum { width: 100%; height: 0; min-height: 100%; }
.scales { display: flex; flex-direction: column; min-height: 0; font-size: 11px; border-left: 1px solid #000; }
.scale { flex: 1 1 0; min-height: 0; display: flex; align-items: center; }
.scale + .scale { border-top: 1px solid #000; }
.scale svg { flex: 1 1 0; min-width: 0; min-height: 0; align-self: stretch; width: 0; height: auto; }
.scale line { stroke: #8a8a8a; }
.scale text { fill: #8a8a8a; }
.hz .scale text { fill: #4e4e4e; }
.hz .scale text.hi { fill: #8a8a8a; }
.scale button { flex: none; width: 22px; height: 18px; margin-right: 1px; justify-content: center; border: 1px solid #303030; border-radius: 3px; color: #353535; }
.strip { grid-column: 1 / 3; display: flex; justify-content: flex-end; align-items: center; border-top: 3px solid #000; background: #2f2f2f; padding-right: 18px; }
.strip i { border: 3px solid transparent; border-top: 4px solid #777; border-bottom: 0; }
.transport { display: flex; align-items: center; height: 37px; padding: 0 12px; }
.time { flex: 1; font-size: 16px; font-weight: 300; color: #585858; }
.tbtns { display: flex; margin-right: 663px; }
.tbtns button { width: 30px; justify-content: center; }
.zbtns { display: flex; }
.zbtns button { width: 30px; justify-content: center; }

.bottom { display: flex; gap: 4px; height: 94px; }
.levels { flex: 1; min-width: 0; }
.levels .tabs { height: 33px; }
.selection .tabs { height: 30px; }
.meter.big { width: auto; height: 41px; margin: 0 7px 0 5px; }
.levelscale { display: block; width: calc(100% - 25px); height: 20px; margin-left: 8px; font-size: 10px; }
.selection { width: 328px; }
.selection table { margin-left: 11px; white-space: nowrap; }
.selection tr { height: 20px; }
.selection td:nth-child(2), .selection th:nth-child(2) { width: 70px; }
.selection th:first-child, .selection tr td:first-child { width: 64px; }
.selection td:nth-child(3), .selection th:nth-child(3) { width: 72px; }

.status { display: flex; align-items: center; height: 20px; background: #232323; margin: 0 1px; padding-left: 7px; white-space: nowrap; }
.msg { flex: 1; }
.st { display: flex; align-items: center; justify-content: center; height: 14px; padding: 0 8px; border-left: 1px solid #303030; color: #8e8e8e; }
.e1 { width: 50px; height: 14px; border-left: 1px solid #303030; }
.e2 { width: 121px; height: 14px; border-left: 1px solid #303030; }
.e3 { width: 48px; height: 14px; border-left: 1px solid #303030; }
.s60 { width: 60px; } .s66 { width: 66px; padding: 0 0 0 8px; } .s114 { width: 114px; }
.edge { height: 2px; background: #191919; padding-left: 521px; }
.edge i { display: block; width: 160px; height: 2px; background: #4c4c4c; }

.overlay { position: absolute; inset: 0; display: flex; justify-content: center; align-items: flex-start; padding-top: 251px; }
.dialog { width: 700px; height: 540px; background: #232323; color: #8a8a8a; border-top: 1px solid #6e6e6e; }
.dialog header { display: flex; align-items: center; height: 30px; padding: 0 1px 0 8px; background: #fff; color: #000; font-size: 12px; }
.dialog h2 { font-size: 12px; flex: 1; }
.dialog header button { width: 19px; height: 19px; margin-top: 3px; justify-content: center; background: #c75050; color: #fff; font: bold 10px/12px Roboto, sans-serif; }
.dpreset { display: flex; align-items: center; height: 20px; margin: 15px 13px 9px 14px; }
.dpreset button { margin-left: 9px; color: #a0a0a0; }
.dpreset i { width: 1px; height: 18px; margin-left: 9px; background: #303030; }
.dpreset .inf { margin-left: auto; }
.dpreset .pick { margin-right: 3px; }
.focus { width: 206px; height: 20px; margin-left: 3px; border: 1px solid #2d8ceb; background: #1b1b1b; color: #a8a8a8; }
.focus select { height: 18px; padding-left: 6px; }
.drop { position: absolute; z-index: 2; left: -1px; top: 19px; width: 220px; height: 116px; padding: 2px; border: 1px solid #ccc; background: #f1f1f1; color: #000; font-size: 12px; list-style: none; }
.drop li { display: flex; align-items: center; height: 22px; }
.drop span { display: flex; align-items: center; justify-content: center; width: 22px; height: 22px; margin-right: 10px; }
.drop .cur { background: #91c9f7; }
.drop .cur::before { content: ''; width: 6px; height: 6px; border-radius: 50%; background: #222; }
hr { margin: 0 15px; border: 0; height: 2px; background: #2e2e2e; }
.graph { height: 194px; margin: 24px 32px 0; padding: 3px 5px 0 9px; border: 1px solid #303030; }
.plot { height: 165px; border-right: 1px solid #b0b0b0; padding-right: 2px; }
.plot > svg { display: block; width: 100%; height: 165px; }
.vis { overflow: visible; }
.faxis { display: block; width: calc(100% - 3px); height: 24px; font-size: 11px; }
.faxis line { stroke: #8a8a8a; }
.faxis text { fill: #4e4e4e; text-anchor: middle; }
.faxis text.hi { fill: #8a8a8a; }
.bands { display: flex; gap: 35px; margin: 11px 0 0 146px; }
.band { width: 25px; }
.band button { width: 25px; height: 22px; justify-content: center; border: 1px solid #303030; border-radius: 3px; color: #404040; font-size: 12px; }
.band button.on { background: #171717; color: #2d8ceb; font-weight: 500; }
.band button.last { background: #1b1b1b; color: #8a8a8a; }
.band i { display: block; height: 4px; margin-top: 3px; }
.ranges { margin: 6px 0 0 27px; }
.ranges tr { height: 23px; }
.ranges th { width: 100px; text-align: right; }
.ranges td { width: 60px; text-align: right; }
.ranges td:nth-child(2) { width: 53px; }
.ranges b, .opts b { color: #2d8ceb; font-weight: 500; }
.off { color: #404040; }
.opts { display: flex; align-items: center; height: 20px; margin: 24px 0 18px 46px; }
.log { width: 121px; height: 20px; margin-left: 3px; border: 1px solid #303030; background: #1b1b1b; color: #b0b0b0; }
.log select { padding-left: 6px; font-weight: 500; }
.fir { margin: 0 5px 0 57px; }
.io { margin: 11px 0 0 16px; }
.actions { display: flex; justify-content: flex-end; gap: 10px; margin: 6px 14px 0 0; }
.actions button { width: 80px; height: 20px; justify-content: center; border: 1px solid #8a8a8a; border-radius: 10px; }
</style>
